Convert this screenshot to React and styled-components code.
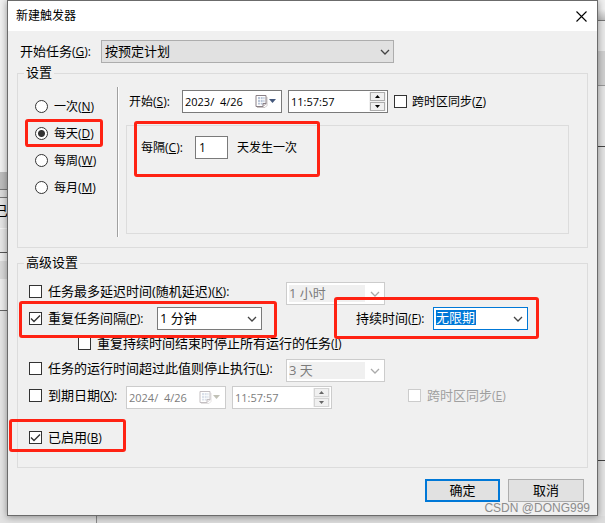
import React from "react";
import styled, { createGlobalStyle, css } from "styled-components";

const GlobalStyle = createGlobalStyle`
  *, *::before, *::after { box-sizing: border-box; }
  body { margin: 0; background: #e2e2e2; }
  body, input, button, select {
    font-family: "Open Sans", "Noto Sans CJK SC", sans-serif;
    color: #000;
  }
`;

const Desktop = styled.div`
  position: relative;
  min-height: 100vh;
  padding: 0 7px 7px;
  overflow: hidden;
  background:
    linear-gradient(
      #f0f0f0 0 172px, #bdbdbd 172px 189px, #777 189px 190px, #dadada 190px 197px,
      #777 197px 198px, #e4e4e4 198px 228px, #f4f4f4 228px 229px, #e6e6e6 229px 252px,
      #555 252px 253px, #ececec 253px 261px, #d8d8d8 261px 279px, #ececec 279px 310px,
      #666 310px 311px, #e4e4e4 311px
    ) left top / 7px 516px no-repeat,
    linear-gradient(
      #f0f0f0 0 9px, #bdbdbd 20px, #777 20px 21px, #e8e8e8 21px 51px, #cfcfcf 51px 85px,
      #999 85px 86px, #e4e4e4 86px 146px, #444 146px 147px, #e2e2e2 147px 460px,
      #444 460px 461px, #e2e2e2 461px
    ) right top / 7px 516px no-repeat,
    linear-gradient(90deg, #e2e2e2 0 96px, #8a8a8a 96px 97px, #dcdcdc 97px) left bottom / 100% 7px no-repeat;
`;

const BehindText = styled.span`
  position: absolute;
  left: -6px;
  top: 202px;
  font-size: 14px;
  line-height: 18px;
`;

const Dialog = styled.main`
  position: relative;
  border: 1px solid #6b6b6b;
  background: #f0f0f0;
  box-shadow: 0 1px 7px rgba(0, 0, 0, 0.4);
`;

const TitleBar = styled.header`
  display: flex;
  align-items: center;
  justify-content: space-between;
  height: 30px;
  padding: 0 8px;
  background: #fff;
`;

const Title = styled.h1`
  margin: 0;
  font-size: 12px;
  font-weight: 400;
  line-height: 16px;
`;

const CloseButton = styled.button`
  display: grid;
  place-items: center;
  width: 16px;
  height: 24px;
  padding: 0;
  border: 0;
  background: none;
`;

const Body = styled.form`
  padding: 9px 9px 13px;
`;

const Row = styled.div`
  position: relative;
  display: flex;
  align-items: center;
  height: 23px;
  margin-top: ${(p) => p.$above || 0}px;
  padding-left: ${(p) => p.$indent || 0}px;
`;

const Text = styled.label`
  flex: none;
  width: ${(p) => (p.$width ? p.$width + "px" : "auto")};
  margin-left: ${(p) => p.$before || 0}px;
  font-size: ${(p) => (p.$small ? 12 : 13)}px;
  line-height: 18px;
  white-space: nowrap;
`;

const Choice = styled.label`
  flex: none;
  display: flex;
  align-items: center;
  gap: ${(p) => p.$gap || 6}px;
  width: ${(p) => (p.$width ? p.$width + "px" : "auto")};
  margin-left: ${(p) => p.$before || 0}px;
  padding-bottom: ${(p) => (p.$raised ? 4 : 0)}px;
  font-size: ${(p) => (p.$small ? 12 : 13)}px;
  line-height: 18px;
  white-space: nowrap;
  color: ${(p) => (p.$disabled ? "#a0a0a0" : "#000")};
`;

const Latin = styled.span`
  font-size: 12px;
`;

const Group = styled.fieldset`
  min-width: 0;
  margin: ${(p) => p.$above}px 0 0;
  padding: 0;
  border: 1px solid #dcdcdc;
`;

const Legend = styled.legend`
  margin-left: 6px;
  padding: 0 2px 2px;
  font-size: 13px;
  line-height: 14px;
`;

const Schedule = styled.div`
  display: grid;
  grid-template-columns: 99px 2px 1fr;
  padding: 6px 18px 10px 0;
`;

const Frequencies = styled.div`
  display: grid;
  grid-auto-rows: 27px;
  align-content: start;
  padding: 6px 0 0 17px;
`;

const FrequencyItem = styled.div`
  position: relative;
  display: flex;
  align-items: center;
`;

const Divider = styled.div`
  border-left: 1px solid #a0a0a0;
  border-right: 1px solid #fff;
`;

const Details = styled.div`
  padding: 3px 0 3px 7px;
`;

const Panel = styled.div`
  height: 109px;
  margin-top: 12px;
  padding: 10px 14px;
  border: 1px solid #dcdcdc;
`;

const Advanced = styled.div`
  padding: 11px 11px 18px;
`;

const Mark = styled.span`
  position: absolute;
  z-index: 1;
  left: ${(p) => p.$left}px;
  top: ${(p) => p.$top}px;
  width: ${(p) => p.$width}px;
  height: ${(p) => p.$height}px;
  border: 3px solid #ff2213;
  border-radius: 3px;
  pointer-events: none;
`;

const Stack = styled.span`
  display: grid;
  flex: none;
  width: 13px;
  height: 13px;
  & > * { grid-area: 1 / 1; }
  svg { width: 13px; height: 13px; pointer-events: none; }
`;

const Tick = styled.input`
  appearance: none;
  width: 13px;
  height: 13px;
  margin: 0;
  border: 1px solid #333;
  background: #fff;
  & + svg { visibility: hidden; }
  &:checked + svg { visibility: visible; }
  &:disabled { border-color: #ccc; }
`;

const Radio = styled.input`
  appearance: none;
  flex: none;
  width: 13px;
  height: 13px;
  margin: 0;
  border: 1px solid #333;
  border-radius: 50%;
  background: #fff;
  &:checked { background: radial-gradient(circle, #333 0 3px, #fff 4px); }
`;

const StartPicker = styled.span`
  display: grid;
  flex: 0 1 293px;
  align-items: center;
  & > * { grid-area: 1 / 1; }
  svg { justify-self: end; margin-right: 4px; pointer-events: none; }
`;

const Select = styled.select`
  appearance: none;
  width: 100%;
  height: 23px;
  padding: 0 20px 2px 3px;
  border: 1px solid #adadad;
  border-radius: 0;
  background: #e1e1e1;
  font-size: 13px;
`;

const Field = styled.span`
  display: flex;
  flex: none;
  align-items: center;
  width: ${(p) => p.$width || 100}px;
  height: 23px;
  margin-left: ${(p) => p.$before || 0}px;
  padding: ${(p) => p.$pad || "1px"};
  border: 1px solid ${(p) => (p.$disabled ? "#ccc" : p.$active ? "#0078d7" : "#7a7a7a")};
  background: #fff;
`;

const Entry = styled.input`
  flex: 1;
  min-width: 0;
  height: 100%;
  margin: 0;
  padding: 0 1px;
  border: 0;
  outline: 0;
  background: transparent;
  font-size: ${(p) => (p.$combo ? 13 : 11)}px;
  white-space: pre;
  &:disabled { color: #6d6d6d; -webkit-text-fill-color: #7c7c7c; }
  ${(p) => p.$combo && css`
    padding: 0 0 2px;
    &:disabled { background: #f0f0f0; }
  `}
  ${(p) => p.$selected && css`
    flex: 0 0 40px;
    height: 15px;
    margin-bottom: 2px;
    background: #0078d7;
    color: #fff;
  `}
`;

const DropButton = styled.button`
  display: grid;
  place-items: center;
  width: 17px;
  height: 17px;
  margin-left: auto;
  padding: 0 0 0 3px;
  border: 0;
  background: none;
`;

const CalendarButton = styled(DropButton)`
  width: 26px;
  padding: 0 4px 0 0;
`;

const Spinner = styled.span`
  display: grid;
  gap: 1px;
  width: 17px;
  padding: 0 1px;
  background: #f0f0f0;
`;

const SpinButton = styled.button`
  display: grid;
  place-items: center;
  height: 9px;
  padding: 0;
  border: 1px solid ${(p) => (p.disabled ? "#d4d4d4" : "#adadad")};
  background: #f0f0f0;
`;

const DayCount = styled.input`
  width: 33px;
  height: 23px;
  padding: 0 3px 1px;
  border: 1px solid #7a7a7a;
  font-size: 12px;
`;

const Footer = styled.footer`
  display: flex;
  justify-content: flex-end;
  gap: 8px;
  margin-top: 11px;
  padding-right: 4px;
`;

const PushButton = styled.button`
  width: ${(p) => (p.$primary ? 75 : 76)}px;
  height: 23px;
  padding: 0 0 2px;
  border: ${(p) => (p.$primary ? "2px solid #0078d7" : "1px solid #adadad")};
  background: #e1e1e1;
  font-size: 13px;
  line-height: 18px;
`;

const Watermark = styled.span`
  position: absolute;
  right: 7px;
  bottom: 0;
  color: #8c8c8c;
  font: 12px/14px "Liberation Sans", sans-serif;
`;

const Key = ({ k, colon }) => (
  <Latin>(<u>{k}</u>){colon ? ":" : ""}</Latin>
);

const Chevron = ({ color = "#444" }) => (
  <svg width="10" height="6" viewBox="0 0 10 6" fill="none" stroke={color} strokeWidth="1.3" aria-hidden="true">
    <path d="M1 1l4 4 4-4" />
  </svg>
);

const CheckBox = (props) => (
  <Stack>
    <Tick type="checkbox" {...props} />
    <svg viewBox="0 0 13 13" fill="none" stroke="#333" strokeWidth="1.4" aria-hidden="true">
      <path d="M2 6.4l3 3L11 3.4" />
    </svg>
  </Stack>
);

const Combo = ({ id, label, value, width, disabled, selected }) => (
  <Field $width={width} $disabled={disabled} $active={selected} $pad="2px">
    <Entry id={id} aria-label={label} role="combobox" aria-expanded="false" defaultValue={value} disabled={disabled} $combo $selected={selected} />
    <DropButton type="button" aria-label="展开" disabled={disabled}>
      <Chevron color={disabled ? "#aaa" : "#444"} />
    </DropButton>
  </Field>
);

const Calendar = ({ disabled }) => (
  <svg width="21" height="13" viewBox="0 0 21 13" fill="none" aria-hidden="true" opacity={disabled ? 0.5 : 1}>
    <path d="M2 12.5h8l2-2V2" stroke="#c9c4c4" />
    <path d="M1 .5h10v8l-3 3H1z" fill="#fff" stroke="#8a8086" />
    <path d="M3 2h6.500v6.500l-1 1H3z" fill="#b9c5d8" />
    <path d="M3 4.500h7M3 7.500h7M5.500 2v8M8 2v8" stroke="#fff" strokeWidth=".7" />
    <path d="M11 8.500H8v3" fill="#e8e4e4" stroke="#8a8086" />
    <path d="M14 4h7l-3.500 4z" fill={disabled ? "#85856f" : "#44587c"} />
  </svg>
);

const DateField = ({ id, label, value, disabled }) => (
  <Field $disabled={disabled}>
    <Entry id={id} aria-label={label} defaultValue={value} disabled={disabled} />
    <CalendarButton type="button" aria-label="选择日期" disabled={disabled}>
      <Calendar disabled={disabled} />
    </CalendarButton>
  </Field>
);

const Arrow = ({ down, disabled }) => (
  <svg width="5" height="3" viewBox="0 0 5 3" aria-hidden="true">
    <path d={down ? "M0 0h5L2.500 3z" : "M0 3h5L2.500 0z"} fill={disabled ? "#666" : "#000"} />
  </svg>
);

const TimeField = ({ label, value, disabled }) => (
  <Field $before={6} $disabled={disabled}>
    <Entry aria-label={label} defaultValue={value} disabled={disabled} />
    <Spinner>
      <SpinButton type="button" aria-label="增加" disabled={disabled}><Arrow disabled={disabled} /></SpinButton>
      <SpinButton type="button" aria-label="减少" disabled={disabled}><Arrow down disabled={disabled} /></SpinButton>
    </Spinner>
  </Field>
);

const FREQUENCIES = [
  { name: "一次", k: "N" },
  { name: "每天", k: "D", marked: true },
  { name: "每周", k: "W" },
  { name: "每月", k: "M" },
];

export default function App() {
  return (
    <Desktop>
      <GlobalStyle />
      <BehindText aria-hidden="true">已</BehindText>
      <Dialog>
        <TitleBar>
          <Title>新建触发器</Title>
          <CloseButton type="button" aria-label="关闭">
            <svg width="11" height="11" viewBox="0 0 11 11" stroke="#000" strokeWidth="1.1" aria-hidden="true">
              <path d="M.5.500l10 10M10.500.500l-10 10" />
            </svg>
          </CloseButton>
        </TitleBar>
        <Body onSubmit={(e) => e.preventDefault()}>
          <Row $indent={3}>
            <Text htmlFor="begin" $width={81}>开始任务<Key k="G" colon /></Text>
            <StartPicker>
              <Select id="begin"><option>按预定计划</option></Select>
              <Chevron />
            </StartPicker>
          </Row>

          <Group $above={2}>
            <Legend>设置</Legend>
            <Schedule>
              <Frequencies>
                {FREQUENCIES.map((f) => (
                  <FrequencyItem key={f.k}>
                    <Choice $small>
                      <Radio type="radio" name="frequency" defaultChecked={f.marked} />
                      <span>{f.name}<Key k={f.k} /></span>
                    </Choice>
                    {f.marked && <Mark $left={-10} $top={-1} $width={78} $height={28} />}
                  </FrequencyItem>
                ))}
              </Frequencies>
              <Divider />
              <Details>
                <Row $indent={3}>
                  <Text htmlFor="start" $small $width={53}>开始<Key k="S" colon /></Text>
                  <DateField id="start" value="2023/  4/26" />
                  <TimeField label="开始时间" value="11:57:57" />
                  <Choice $small $before={6} $gap={5}>
                    <CheckBox />
                    <span>跨时区同步<Key k="Z" /></span>
                  </Choice>
                </Row>
                <Panel>
                  <Row>
                    <Text htmlFor="days" $small $width={54}>每隔<Key k="C" colon /></Text>
                    <DayCount id="days" defaultValue="1" />
                    <Text as="span" $small $before={9}>天发生一次</Text>
                    <Mark $left={-7} $top={-15} $width={186} $height={56} />
                  </Row>
                </Panel>
              </Details>
            </Schedule>
          </Group>

          <Group $above={7}>
            <Legend>高级设置</Legend>
            <Advanced>
              <Row>
                <Choice $width={257} $raised><CheckBox /><span>任务最多延迟时间(随机延迟)<Key k="K" colon /></span></Choice>
                <Combo label="延迟时间" value="1 小时" width={99} disabled />
              </Row>
              <Row $above={2}>
                <Choice $width={128}><CheckBox defaultChecked /><span>重复任务间隔<Key k="P" colon /></span></Choice>
                <Combo label="重复间隔" value="1 分钟" width={105} />
                <Text htmlFor="duration" $before={94} $width={77}>持续时间<Key k="F" colon /></Text>
                <Combo id="duration" value="无限期" width={95} selected />
                <Mark $left={-10} $top={-6} $width={258} $height={37} />
                <Mark $left={305} $top={-10} $width={205} $height={42} />
              </Row>
              <Row $above={2} $indent={49}>
                <Choice><CheckBox /><span>重复持续时间结束时停止所有运行的任务<Key k="I" /></span></Choice>
              </Row>
              <Row $above={4}>
                <Choice $width={257} $raised><CheckBox /><span>任务的运行时间超过此值则停止执行<Key k="L" colon /></span></Choice>
                <Combo label="停止时间" value="3 天" width={99} disabled />
              </Row>
              <Row $above={4}>
                <Choice $width={97} $raised><CheckBox /><span>到期日期<Key k="X" colon /></span></Choice>
                <DateField label="到期日期" value="2024/  4/26" disabled />
                <TimeField label="到期时间" value="11:57:57" disabled />
                <Choice $before={76} $disabled $raised><CheckBox disabled /><span>跨时区同步<Key k="E" /></span></Choice>
              </Row>
              <Row $above={17}>
                <Choice><CheckBox defaultChecked /><span>已启用<Key k="B" /></span></Choice>
                <Mark $left={-20} $top={-7} $width={117} $height={33} />
              </Row>
            </Advanced>
          </Group>

          <Footer>
            <PushButton type="submit" $primary>确定</PushButton>
            <PushButton type="button">取消</PushButton>
          </Footer>
        </Body>
        <Watermark>CSDN @DONG999</Watermark>
      </Dialog>
    </Desktop>
  );
}
